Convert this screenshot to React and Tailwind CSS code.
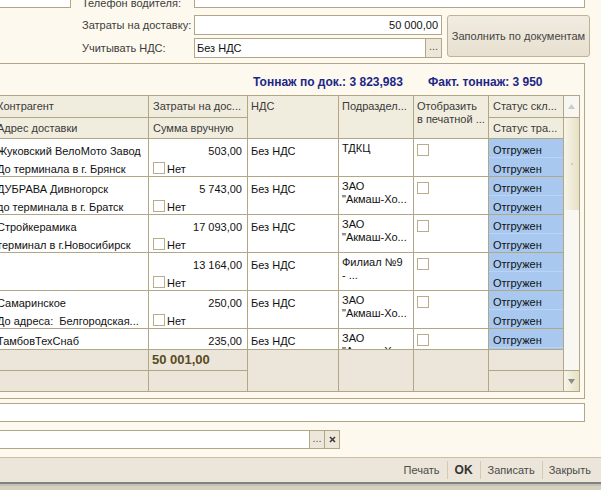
import React from "react";

const rows = [
  { name: "Жуковский ВелоМото Завод", addr: "До терминала в г. Брянск", sum: "503,00", div: ["ТДКЦ"] },
  { name: "ДУБРАВА Дивногорск", addr: "до терминала в г. Братск", sum: "5 743,00", div: ["ЗАО", "\"Акмаш-Хо..."] },
  { name: "Стройкерамика", addr: "терминал в г.Новосибирск", sum: "17 093,00", div: ["ЗАО", "\"Акмаш-Хо..."] },
  { name: "", addr: "", sum: "13 164,00", div: ["Филиал №9", "- ..."] },
  { name: "Самаринское", addr: "До адреса:  Белгородская...", sum: "250,00", div: ["ЗАО", "\"Акмаш-Хо..."] },
  { name: "ТамбовТехСнаб", addr: "", sum: "235,00", div: ["ЗАО", "\"Акмаш-Хо..."], last: true },
];

function Box() {
  return <span className="block w-[12px] h-[12px] shrink-0 bg-white border border-[#B7AD8C]" />;
}

function Row({ r }) {
  return (
    <div className="flex h-[38px] shrink-0 border-b border-[#B1A787] bg-white text-[#111]">
      <div className="w-[154px] shrink-0 border-r border-[#B1A787] pl-[2px] pt-[3px] leading-[18px] whitespace-pre overflow-hidden">
        <div className="h-[18px]">{r.name}</div>
        <div className="h-[18px]">{r.addr}</div>
      </div>
      <div className="w-[99px] shrink-0 border-r border-[#B1A787] pl-[4px] pr-[5px] pt-[3px] leading-[18px] whitespace-nowrap overflow-hidden">
        <div className="h-[18px] text-right">{r.sum}</div>
        {!r.last && (
          <div className="flex items-start h-[18px] pt-[2px]">
            <Box />
            <span className="ml-[2px] leading-[14px]">Нет</span>
          </div>
        )}
      </div>
      <div className="w-[91px] shrink-0 border-r border-[#B1A787] pl-[3px] pt-[3px] leading-[18px] whitespace-nowrap">
        Без НДС
      </div>
      <div className="w-[75px] shrink-0 border-r border-[#B1A787] pl-[3px] pt-[3px] leading-[13px] whitespace-nowrap overflow-hidden">
        {r.div.map((t, i) => (
          <div key={i}>{t}</div>
        ))}
      </div>
      <div className="w-[75px] shrink-0 border-r border-[#B1A787] pl-[3px] pt-[5px]">
        <Box />
      </div>
      <div className="w-[75px] shrink-0 border-r border-[#B1A787] bg-[#A8C8F0] flex flex-col whitespace-nowrap">
        <div className="h-[19px] border-b border-[#BCD4F3] pl-[4px] pt-[2px] leading-[18px]">Отгружен</div>
        {!r.last && <div className="pl-[4px] pt-[2px] leading-[18px]">Отгружен</div>}
      </div>
    </div>
  );
}

function ScrollBar() {
  return (
    <div className="w-[15px] shrink-0 flex flex-col bg-[#F8F7F2]">
      <div className="h-[22px] shrink-0 border-b border-[#B1A787] flex items-center justify-center bg-[#F7F6F0]">
        <svg width="7" height="5" viewBox="0 0 7 5">
          <path d="M0 5 L3.5 0 L7 5 Z" fill="#CBCBCB" />
        </svg>
      </div>
      <div className="h-[92px] shrink-0 bg-gradient-to-r from-[#F8F5E7] to-[#E6E0C6] flex items-center justify-center">
        <span className="block w-[2px] h-[2px] bg-[#CFCABA]" />
      </div>
      <div className="flex-1" />
      <div className="h-[21px] shrink-0 border-t border-[#B1A787] bg-gradient-to-r from-[#F8F5E7] to-[#E6E0C6] flex items-center justify-center">
        <svg width="7" height="5" viewBox="0 0 7 5">
          <path d="M0 0 L7 0 L3.5 5 Z" fill="#8C8C8C" />
        </svg>
      </div>
    </div>
  );
}

function Sep() {
  return <span className="block w-px h-[18px] bg-[#D2CAB2]" />;
}

export default function App() {
  return (
    <div className="w-[601px] h-[490px] overflow-hidden bg-[#FDF9EE] text-[11px] text-[#1E1E1E] font-['Liberation_Sans',Arial,sans-serif] flex flex-col">
      <div className="-ml-[7px] w-[608px] flex flex-col shrink-0">
        {/* driver phone row, scrolled partly out of view */}
        <div className="flex h-[20px] -mt-[12px]">
          <div className="w-[78px] h-[20px] shrink-0 bg-white border border-[#B1A787]" />
          <div className="ml-[11px] w-[112px] shrink-0 pt-[5px] leading-[20px] text-[#3C3C3C] whitespace-nowrap">
            Телефон водителя:
          </div>
          <div className="w-[391px] h-[20px] shrink-0 bg-white border border-[#B1A787]" />
        </div>

        {/* delivery cost and VAT */}
        <div className="flex mt-[7px]">
          <div className="w-[89px] shrink-0" />
          <div className="flex flex-col gap-[3px]">
            <div className="flex h-[20px]">
              <div className="w-[112px] shrink-0 leading-[20px] text-[#3C3C3C] whitespace-nowrap">Затраты на доставку:</div>
              <div className="w-[248px] shrink-0 bg-white border border-[#B1A787] text-right pr-[3px] leading-[18px] text-[#111]">
                50 000,00
              </div>
            </div>
            <div className="flex h-[20px]">
              <div className="w-[112px] shrink-0 leading-[20px] text-[#3C3C3C] whitespace-nowrap">Учитывать НДС:</div>
              <div className="w-[248px] shrink-0 bg-white border border-[#B1A787] flex">
                <span className="flex-1 pl-[2px] leading-[18px] text-[#111]">Без НДС</span>
                <span className="w-[16px] border-l border-[#B1A787] bg-[#EDE7D9] text-center leading-[15px] text-[#555]">
                  ...
                </span>
              </div>
            </div>
          </div>
          <button className="ml-[5px] w-[143px] h-[42px] shrink-0 rounded-[3px] border border-[#BDB494] bg-gradient-to-b from-[#F1ECE1] to-[#E7E0D0] text-[#444] leading-[14px]">
            Заполнить по документам
          </button>
        </div>

        {/* goods group */}
        <div className="mt-[5px] w-[592px] h-[336px] shrink-0 border border-[#B1A787] flex flex-col">
          <div className="h-[31px] shrink-0 pl-[259px] pt-[11px] leading-[14px] text-[12px] font-bold text-[#1C2687] flex whitespace-nowrap">
            <span className="w-[175px] shrink-0">Тоннаж по док.: 3 823,983</span>
            <span>Факт. тоннаж: 3 950</span>
          </div>

          <div className="w-[586px] h-[297px] shrink-0 border border-[#B1A787] flex">
            <div className="w-[569px] shrink-0 flex flex-col">
              {/* header */}
              <div className="flex h-[43px] shrink-0 border-b border-[#B1A787] bg-[#F1EDDE] text-[#3A3A3A] whitespace-nowrap">
                <div className="w-[154px] shrink-0 border-r border-[#B1A787] flex flex-col">
                  <div className="h-[22px] border-b border-[#B1A787] pl-[2px] leading-[21px]">Контрагент</div>
                  <div className="h-[20px] pl-[2px] leading-[20px]">Адрес доставки</div>
                </div>
                <div className="w-[99px] shrink-0 border-r border-[#B1A787] flex flex-col">
                  <div className="h-[22px] border-b border-[#B1A787] pl-[4px] leading-[21px]">Затраты на дос...</div>
                  <div className="h-[20px] pl-[4px] leading-[20px]">Сумма вручную</div>
                </div>
                <div className="w-[91px] shrink-0 border-r border-[#B1A787] pl-[3px] leading-[21px]">НДС</div>
                <div className="w-[75px] shrink-0 border-r border-[#B1A787] pl-[3px] leading-[21px]">Подраздел...</div>
                <div className="w-[75px] shrink-0 border-r border-[#B1A787] pl-[3px] pt-[4px] leading-[13px]">
                  <div>Отобразить</div>
                  <div>в печатной ...</div>
                </div>
                <div className="w-[75px] shrink-0 border-r border-[#B1A787] flex flex-col">
                  <div className="h-[22px] border-b border-[#B1A787] pl-[4px] leading-[21px]">Статус скл...</div>
                  <div className="h-[20px] pl-[4px] leading-[20px]">Статус тра...</div>
                </div>
              </div>

              {/* rows */}
              <div className="h-[210px] shrink-0 overflow-hidden flex flex-col bg-white">
                {rows.map((r, i) => (
                  <Row key={i} r={r} />
                ))}
              </div>

              {/* totals */}
              <div className="flex h-[42px] shrink-0 border-t border-[#B1A787] bg-[#ECE6DA]">
                <div className="w-[154px] shrink-0 border-r border-[#B1A787] flex flex-col">
                  <div className="h-[21px] border-b border-[#B1A787]" />
                </div>
                <div className="w-[99px] shrink-0 border-r border-[#B1A787] flex flex-col">
                  <div className="h-[21px] border-b border-[#B1A787] pl-[3px] leading-[20px] text-[13px] font-bold text-[#5A4B22]">
                    50 001,00
                  </div>
                </div>
                <div className="w-[91px] shrink-0 border-r border-[#B1A787]" />
                <div className="w-[75px] shrink-0 border-r border-[#B1A787]" />
                <div className="w-[75px] shrink-0 border-r border-[#B1A787]" />
                <div className="w-[75px] shrink-0 border-r border-[#B1A787] flex flex-col">
                  <div className="h-[21px] border-b border-[#B1A787]" />
                </div>
              </div>
            </div>
            <ScrollBar />
          </div>
        </div>

        {/* comment */}
        <div className="mt-[4px] w-[592px] h-[19px] shrink-0 bg-white border border-[#B1A787]" />

        {/* responsible */}
        <div className="mt-[8px] flex h-[19px]">
          <div className="w-[317px] shrink-0 bg-white border border-[#B1A787]" />
          <div className="w-[16px] shrink-0 -ml-px border border-[#B1A787] bg-[#EDE7D9] text-center leading-[15px] text-[#555]">...</div>
          <div className="w-[16px] shrink-0 -ml-px border border-[#B1A787] bg-[#EDE7D9] flex items-center justify-center">
            <svg width="7" height="7" viewBox="0 0 7 7">
              <path d="M1 1 L6 6 M6 1 L1 6" stroke="#3A3A3A" strokeWidth="1.6" />
            </svg>
          </div>
        </div>
      </div>

      {/* command bar */}
      <div className="mt-[8px] h-[25px] shrink-0 border-t border-[#C9C0A4] bg-[#ECE6DA] flex items-center justify-end pr-[10px] text-[#4A4A4A] whitespace-nowrap">
        <span className="pr-[7px] leading-[24px]">Печать</span>
        <Sep />
        <span className="px-[7px] leading-[24px] text-[12px] font-bold text-[#333]">OK</span>
        <Sep />
        <span className="px-[7px] leading-[24px]">Записать</span>
        <Sep />
        <span className="pl-[6px] leading-[24px]">Закрыть</span>
      </div>
      <div className="h-[2px] shrink-0 bg-[#828282]" />
      <div className="h-[2px] shrink-0 bg-[#C3C1B8]" />
      <div className="flex-1 bg-[#D6D2BE]" />
    </div>
  );
}
